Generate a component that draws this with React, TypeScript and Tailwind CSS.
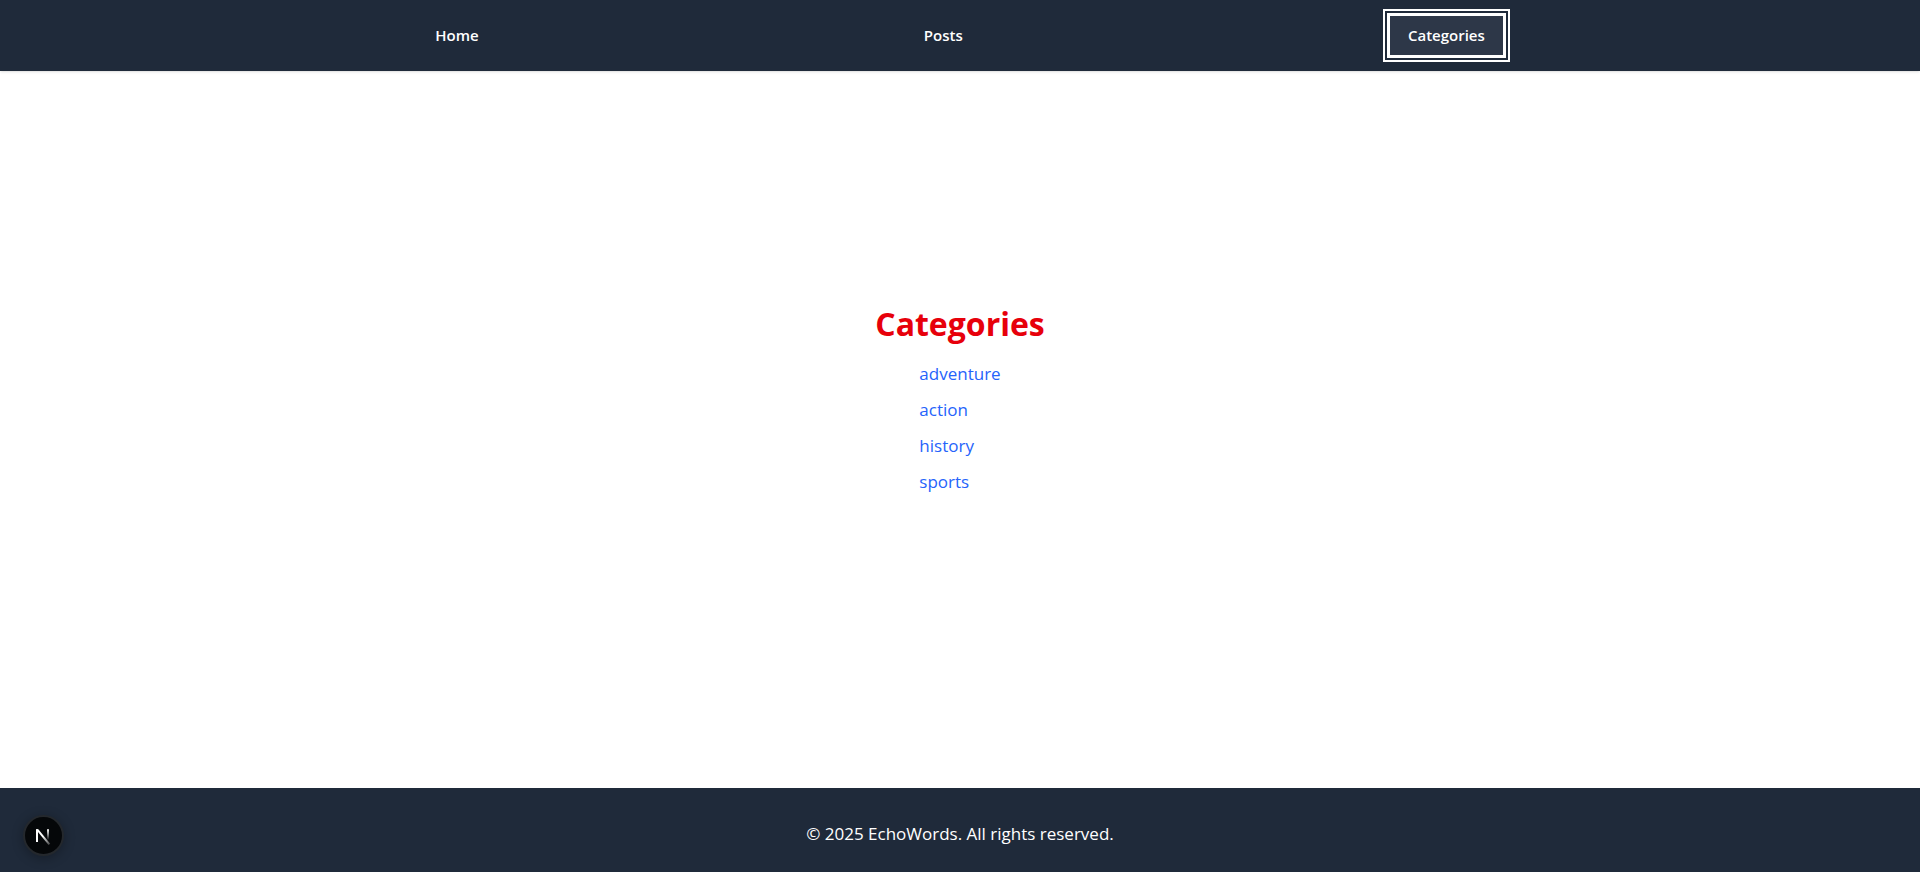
const NAV_ITEMS = ["Home", "Posts", "Categories"];
const CATEGORIES = ["adventure", "action", "history", "sports"];

function NavItem({ label, active }: { label: string; active: boolean }) {
  const base = "block px-[18px] py-2 text-[15px] leading-[23px] font-semibold text-white";
  const focus = "bg-[#2d3748] outline-2 outline-offset-5 outline-white ring-3 ring-white";
  return (
    <li>
      <a
        href={`#${label.toLowerCase()}`}
        aria-current={active ? "page" : undefined}
        className={active ? `${base} ${focus}` : base}
      >
        {label}
      </a>
    </li>
  );
}

function DevBadge() {
  return (
    <button
      type="button"
      aria-label="Open developer tools"
      className="fixed bottom-4 left-[23px] flex size-[41px] items-center justify-center rounded-full border-2 border-[#24282d] bg-[#050709] shadow-[0_2px_12px_rgba(0,0,0,0.3)]"
    >
      <svg width="37" height="37" viewBox="0 0 37 37" fill="none" aria-hidden="true">
        <defs>
          <linearGradient id="diagonal" x1="18" y1="19" x2="25" y2="28" gradientUnits="userSpaceOnUse">
            <stop stopColor="white" />
            <stop offset="1" stopColor="white" stopOpacity="0.2" />
          </linearGradient>
          <linearGradient id="stem" x1="23" y1="12" x2="23" y2="23" gradientUnits="userSpaceOnUse">
            <stop stopColor="white" />
            <stop offset="1" stopColor="white" stopOpacity="0" />
          </linearGradient>
        </defs>
        <path d="M11 12.3H13.3L25.2 26.8L23.6 28L13 15Z" fill="url(#diagonal)" />
        <path d="M12 12.3V25" stroke="white" strokeWidth="2" />
        <path d="M23 12.3V23" stroke="url(#stem)" strokeWidth="2" />
      </svg>
    </button>
  );
}

export default function App() {
  return (
    <div className="flex min-h-screen flex-col bg-white font-['Open_Sans','Noto_Sans',sans-serif]">
      <header className="bg-[#1f2a3a] py-4 shadow-sm">
        <nav aria-label="Main">
          <ul className="flex justify-evenly px-2">
            {NAV_ITEMS.map((label) => (
              <NavItem key={label} label={label} active={label === "Categories"} />
            ))}
          </ul>
        </nav>
      </header>

      <main className="flex grow flex-col items-center justify-center pb-15">
        <h1 className="mb-4 text-[32px] leading-10 font-bold text-[#e7000b]">Categories</h1>
        <ul className="flex flex-col gap-2">
          {CATEGORIES.map((name) => (
            <li key={name} className="text-[17px] leading-7">
              <a href={`#${name}`} className="text-[#2563fb]">
                {name}
              </a>
            </li>
          ))}
        </ul>
      </main>

      <footer className="bg-[#1f2a3a] pt-8 pb-6 text-center text-[17px] leading-7 text-white">
        <p>© 2025 EchoWords. All rights reserved.</p>
      </footer>

      <DevBadge />
    </div>
  );
}
